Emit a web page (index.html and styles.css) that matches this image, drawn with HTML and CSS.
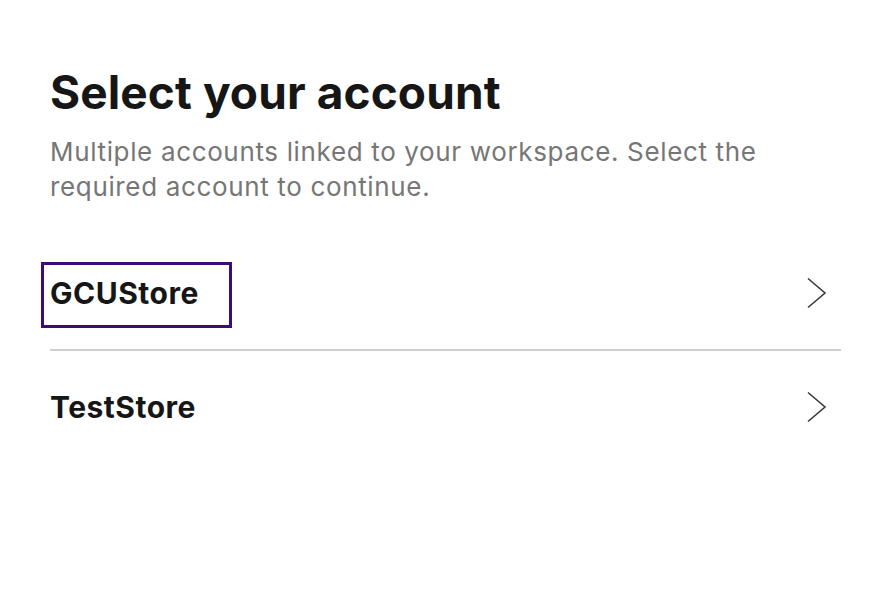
FILE: index.html
```html
<!DOCTYPE html>
<html lang="en">
<head>
<meta charset="utf-8">
<title>Select your account</title>
<link rel="stylesheet" href="styles.css">
</head>
<body>
<main class="page">
  <h1 class="title">Select your account</h1>
  <p class="subtitle">Multiple accounts linked to your workspace. Select the required account to continue.</p>
  <ul class="accounts">
    <li class="account">
      <a class="account-link" href="#"><span class="account-name focused">GCUStore</span>
        <svg class="chevron" width="22" height="32" viewBox="0 0 22 32"><path d="M2 1.5 L19 16 L2 30.5" fill="none" stroke="#3a3a3a" stroke-width="1.6"/></svg>
      </a>
    </li>
    <li class="account">
      <a class="account-link" href="#"><span class="account-name">TestStore</span>
        <svg class="chevron" width="22" height="32" viewBox="0 0 22 32"><path d="M2 1.5 L19 16 L2 30.5" fill="none" stroke="#3a3a3a" stroke-width="1.6"/></svg>
      </a>
    </li>
  </ul>
</main>
</body>
</html>
```
FILE: styles.css
```css
* { box-sizing: border-box; }
html, body { margin: 0; padding: 0; background: #fff; }
body { font-family: Inter, "Liberation Sans", sans-serif; color: #161616; }
.page { padding: 64px 50px 0 50px; }
.title { margin: 0; font-size: 46px; font-weight: 700; line-height: 56px; letter-spacing: 0.1px; color: #161616; }
.subtitle { margin: 14px 0 0 0; font-size: 26px; line-height: 35px; color: #767676; font-weight: 400; letter-spacing: 0.65px; max-width: 740px; }
.accounts { list-style: none; margin: 33px 0 0 0; padding: 0; }
.account { border-bottom: 2px solid #cfcfcf; }
.account:last-child { border-bottom: none; }
.account-link { display: flex; align-items: center; justify-content: space-between; height: 112px; text-decoration: none; color: #161616; padding-right: 13px; }
.account-name { font-size: 30px; font-weight: 700; letter-spacing: 0.5px; line-height: 56px; }
.account-name.focused { outline: 3px solid #3d0a7a; outline-offset: 0; padding: 0 30px 4px 6px; margin: 4px 0 0 -6px; }
.chevron { display: block; }
```
